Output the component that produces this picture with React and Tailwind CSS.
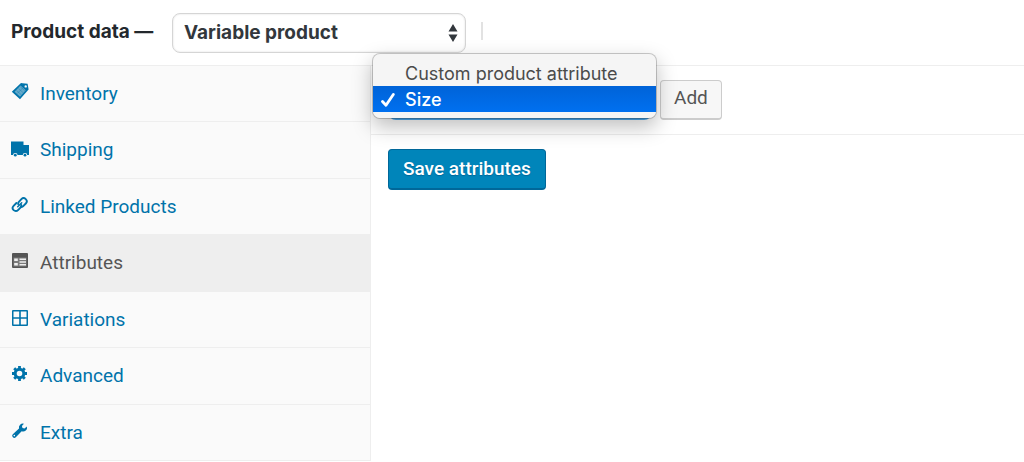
import { useState } from 'react'

const TABS = [
  { id: 'inventory', label: 'Inventory', icon: TagIcon },
  { id: 'shipping', label: 'Shipping', icon: TruckIcon },
  { id: 'linked', label: 'Linked Products', icon: LinkIcon },
  { id: 'attributes', label: 'Attributes', icon: FormIcon },
  { id: 'variations', label: 'Variations', icon: GridIcon },
  { id: 'advanced', label: 'Advanced', icon: GearIcon },
  { id: 'extra', label: 'Extra', icon: WrenchIcon },
]

const ATTRIBUTES = ['Custom product attribute', 'Size']

function Icon({ children }) {
  return (
    <svg viewBox="0 0 18 18" className="mb-1 size-[18px] shrink-0" fill="currentColor" aria-hidden="true">
      {children}
    </svg>
  )
}

function TagIcon() {
  return (
    <Icon>
      <path fillRule="evenodd" d="M10 0 11.5.2 16.6.8 17.6 6.5 9 16.3.8 8.8ZM14.7 2.200a1.200 1.200 0 1 0 0 2.400 1.200 1.200 0 0 0 0-2.400Z" />
      <path d="M9.500 2.500 14.800 7.300 9 13.800 3.500 8.700Z" fill="#fafafa" fillOpacity="0.400" />
      <path d="m5.500 7.500 5 4.500M7.500 5.500l5 4.500M9.300 3.700l4.500 4M6 10.700l6.500-6.500" stroke="currentColor" strokeOpacity="0.500" strokeWidth="0.700" fill="none" />
    </Icon>
  )
}

function TruckIcon() {
  return (
    <Icon>
      <path d="M0 1.500h12.500V5H18v10H0Z" />
      <circle cx="4.300" cy="15.200" r="2.300" fill="#fafafa" />
      <circle cx="14" cy="15.200" r="2.300" fill="#fafafa" />
      <circle cx="4.300" cy="15.200" r="1.400" />
      <circle cx="14" cy="15.200" r="1.400" />
    </Icon>
  )
}

function LinkIcon() {
  return (
    <Icon>
      <g fill="none" stroke="currentColor" strokeWidth="1.900" strokeLinecap="round">
        <path d="M7.200 8.200a3 3 0 0 1 .5-2.200l2.700-2.800a3 3 0 0 1 4.400 4.300l-2.800 2.800a3 3 0 0 1-2.300.8" />
        <path d="M10.200 9a3 3 0 0 1-.5 2.300L7 14.100a3 3 0 0 1-4.400-4.300L5.400 7" />
        <path d="m6.700 10.800 4-4" strokeWidth="1.500" />
      </g>
    </Icon>
  )
}

function FormIcon() {
  return (
    <Icon>
      <path d="M2 1h14a1 1 0 0 1 1 1v13a1 1 0 0 1-1 1H2a1 1 0 0 1-1-1V2a1 1 0 0 1 1-1Z" />
      <path d="M2.500 5.500h13v9h-13Z" fill="#eee" fillOpacity="0.250" />
      <path d="M3.200 6.500h3.600v2.500H3.200ZM3.200 11h3.600v2.500H3.200ZM8.500 6.500H15V8H8.500ZM8.500 9.200H15v1.500H8.500ZM8.500 12H15v1.500H8.500Z" fill="#eee" />
    </Icon>
  )
}

function GridIcon() {
  return (
    <Icon>
      <path fillRule="evenodd" d="M2 1h14a1 1 0 0 1 1 1v14a1 1 0 0 1-1 1H2a1 1 0 0 1-1-1V2a1 1 0 0 1 1-1Zm.5 1.500v5.700h5.700V2.500Zm7.300 0v5.700h5.700V2.500ZM2.500 9.800v5.700h5.700V9.800Zm7.300 0v5.700h5.700V9.800Z" />
    </Icon>
  )
}

function GearIcon() {
  return (
    <Icon>
      <circle cx="8.500" cy="8.500" r="4.300" fill="none" stroke="currentColor" strokeWidth="3" />
      <path d="M8.500 1v3M8.500 13v3M1 8.500h3M13 8.500h3M3.200 3.200l2 2M11.800 11.800l2 2M13.800 3.200l-2 2M5.200 11.800l-2 2" stroke="currentColor" strokeWidth="2.800" />
    </Icon>
  )
}

function WrenchIcon() {
  return (
    <Icon>
      <path fillRule="evenodd" d="M15.900 4.400a4 4 0 0 1-5.200 4.900l-5.900 5.900a2 2 0 0 1-3-2.900l6.200-5.800A4 4 0 0 1 12.900 1.700l-2 2.200.6 2 2 .6ZM3.300 12.800a.8.8 0 1 0 0 1.600.8.8 0 0 0 0-1.600Z" />
    </Icon>
  )
}

function TypeSelect() {
  return (
    <div className="grid w-[294px] items-center">
      <select
        aria-label="Product type"
        className="col-start-1 row-start-1 h-10 w-full appearance-none rounded-lg border border-[#d5d5d5] bg-white px-[11px] font-[Inter,sans-serif] text-[19px] font-bold text-[#32373c] shadow-[inset_0_0_2px_rgba(0,0,0,0.15)]"
      >
        <option>Variable product</option>
        <option>Simple product</option>
      </select>
      <svg viewBox="0 0 10 18" className="pointer-events-none col-start-1 row-start-1 mr-2 h-[18px] w-[10px] justify-self-end" fill="#32373c" aria-hidden="true">
        <path d="M5 0 9.500 7.500H.5ZM5 18 .5 10.500h9Z" />
      </svg>
    </div>
  )
}

function AttributePicker() {
  const [selected, setSelected] = useState('Size')

  return (
    <div className="relative w-[264px]">
      <select
        aria-label="Attribute"
        value={selected}
        onChange={(e) => setSelected(e.target.value)}
        className="block h-10 w-full appearance-none rounded-lg border-2 border-[#4ba9ee] bg-white px-3 text-lg"
      >
        {ATTRIBUTES.map((a) => <option key={a}>{a}</option>)}
      </select>
      {/* open menu, drawn over the closed select */}
      <ul role="listbox" aria-label="Attribute options" className="absolute -top-[27px] -left-4 z-10 w-[285px] rounded-lg border border-black/20 bg-[#f5f5f5] bg-clip-padding py-1.5 font-[Inter,sans-serif] text-lg shadow-[0_8px_20px_rgba(0,0,0,0.25)]">
        {ATTRIBUTES.map((a) => (
          <li
            key={a}
            role="option"
            aria-selected={a === selected}
            onClick={() => setSelected(a)}
            className={a === selected
              ? 'flex h-[26px] items-center bg-gradient-to-b from-[#0063d8] to-[#0070f0] pt-0.5 pl-2 font-medium text-white'
              : 'flex h-[26px] items-center pt-0.5 pl-2 text-[#4b4b4b]'}
          >
            <span className="w-6">
              {a === selected && (
                <svg viewBox="0 0 14 14" className="size-[14px]" fill="none" stroke="currentColor" strokeWidth="2.800" strokeLinecap="round" strokeLinejoin="round" aria-hidden="true">
                  <path d="M1.500 8.500 5 12.300 12.300 1.500" />
                </svg>
              )}
            </span>
            {a}
          </li>
        ))}
      </ul>
    </div>
  )
}

export default function App() {
  const [tab, setTab] = useState('attributes')

  return (
    <div className="bg-white font-[Roboto,sans-serif] text-[19px] text-[#555]">
      <header className="flex items-center border-b border-[#eee] pt-[13px] pb-3">
        <h2 className="ml-[11px] w-[161px] pb-0.5 font-[Inter,sans-serif] font-bold whitespace-nowrap text-[#23282d]">Product data —</h2>
        <TypeSelect />
        <span className="mb-1 ml-[15px] h-[18px] w-0.5 bg-[#e2e2e2]" />
      </header>
      <div className="flex">
        <nav aria-label="Product data" className="grid min-h-[395px] w-[371px] shrink-0 auto-rows-fr border-r border-[#eee] bg-[#fafafa]">
          {TABS.map(({ id, label, icon: TabIcon }) => (
            <a
              key={id}
              href={`#${id}`}
              onClick={() => setTab(id)}
              className={id === tab
                ? 'flex items-center gap-[11px] border-b border-[#eee] bg-[#eee] pt-px pl-[11px] text-[#555]'
                : 'flex items-center gap-[11px] border-b border-[#eee] pt-px pl-[11px] text-[#0073aa]'}
            >
              <TabIcon />
              {label}
            </a>
          ))}
        </nav>
        <main className="flex-1">
          <div className="flex items-center gap-2 border-b border-[#eee] px-[17px] py-3.5">
            <AttributePicker />
            <button type="button" className="h-10 rounded border border-b-2 border-[#ccc] bg-[#f7f7f7] px-[13px] pb-0.5">Add</button>
          </div>
          <div className="px-[17px] py-3.5">
            <button type="button" className="h-[41px] rounded border border-b-2 border-[#006799] bg-[#0085ba] px-3.5 font-medium text-white text-shadow-[0_1px_1px_#006799]">Save attributes</button>
          </div>
        </main>
      </div>
    </div>
  )
}
